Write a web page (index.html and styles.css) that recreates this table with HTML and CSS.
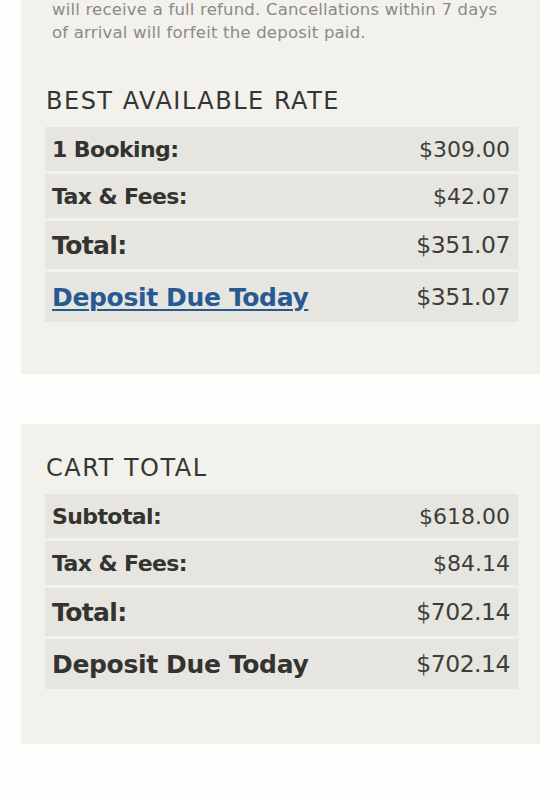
FILE: index.html
```html
<!DOCTYPE html>
<html lang="en">
<head>
<meta charset="utf-8">
<title>Booking Summary</title>
<link rel="stylesheet" href="styles.css">
</head>
<body>
<main class="page">
  <section class="card card-rate">
    <p class="policy">will receive a full refund. Cancellations within 7 days<br>of arrival will forfeit the deposit paid.</p>
    <h2 class="card-title">BEST AVAILABLE RATE</h2>
    <div class="summary">
      <div class="row"><span class="label">1 Booking:</span><span class="value">$309.00</span></div>
      <div class="row"><span class="label">Tax &amp; Fees:</span><span class="value">$42.07</span></div>
      <div class="row row-total"><span class="label">Total:</span><span class="value">$351.07</span></div>
      <div class="row row-deposit"><a class="label link" href="#">Deposit Due Today</a><span class="value">$351.07</span></div>
    </div>
  </section>
  <section class="card card-cart">
    <h2 class="card-title">CART TOTAL</h2>
    <div class="summary">
      <div class="row"><span class="label">Subtotal:</span><span class="value">$618.00</span></div>
      <div class="row"><span class="label">Tax &amp; Fees:</span><span class="value">$84.14</span></div>
      <div class="row row-total"><span class="label">Total:</span><span class="value">$702.14</span></div>
      <div class="row row-deposit"><span class="label">Deposit Due Today</span><span class="value">$702.14</span></div>
    </div>
  </section>
</main>
</body>
</html>
```

FILE: styles.css
```css
html, body {
  margin: 0;
  padding: 0;
  background: #fefefd;
}

body {
  font-family: "DejaVu Sans", "Open Sans", sans-serif;
  color: #333330;
  height: 800px;
  overflow: hidden;
}

.page {
  display: flex;
  flex-direction: column;
  gap: 50px;
  padding-left: 21px;
  width: 519px;
}

.card {
  background: #f2f1ec;
  padding: 0 22px 52px 24px;
}

.card-rate {
  margin-top: -2px;
}

.card-cart {
  padding-top: 29px;
  padding-bottom: 55px;
}

.policy {
  margin: 0 0 42px 7px;
  font-size: 16.5px;
  line-height: 23px;
  letter-spacing: 0.2px;
  color: #8b8a87;
}

.card-title {
  margin: 0 0 11px 1px;
  font-size: 24px;
  line-height: 30px;
  letter-spacing: 1.5px;
  font-weight: normal;
  color: #353532;
}

.summary {
  display: flex;
  flex-direction: column;
  gap: 3px;
}

.row {
  display: flex;
  justify-content: space-between;
  align-items: center;
  background: #e7e5df;
  height: 44px;
  padding: 0 8px 0 7px;
  font-size: 22px;
}

.row-total {
  height: 48px;
  font-size: 25px;
}

.row-deposit {
  height: 50px;
  font-size: 25px;
}

.label {
  font-weight: bold;
  letter-spacing: -0.6px;
  color: #333330;
}

.row-deposit .label {
  letter-spacing: -0.35px;
}

.value {
  font-weight: normal;
  color: #3d3d3a;
}

.row-total .value,
.row-deposit .value {
  font-size: 23.5px;
  letter-spacing: -0.5px;
}

.link {
  color: #285a92;
  text-decoration: underline;
  text-underline-offset: 3px;
  text-decoration-thickness: 2px;
}
```
